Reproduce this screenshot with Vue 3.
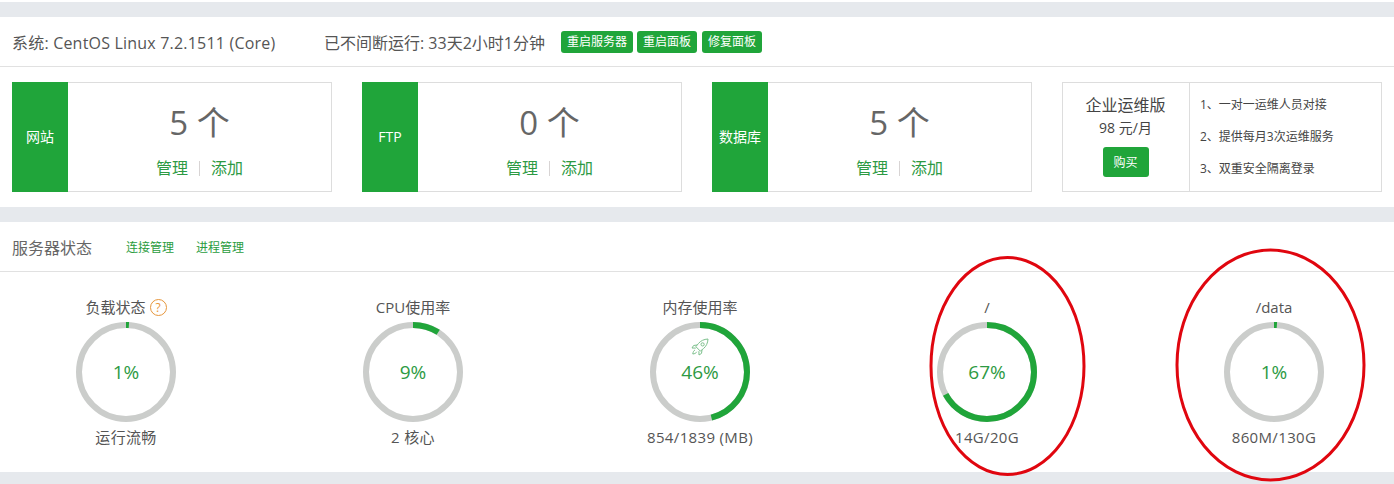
<template>
    <div class="page">
        <div class="band first"></div>

        <section class="panel top-panel">
            <div class="sys-bar">
                <span class="sys-name">系统: CentOS Linux 7.2.1511 (Core)</span>
                <span class="sys-uptime">已不间断运行: 33天2小时1分钟</span>
                <div class="sys-btns">
                    <button v-for="btn in sysButtons" :key="btn" type="button" class="btn-mini">{{ btn }}</button>
                </div>
            </div>

            <div class="cards">
                <div class="card" v-for="card in cards" :key="card.name">
                    <div class="card-tag">{{ card.name }}</div>
                    <div class="card-body">
                        <div class="card-count">{{ card.count }} 个</div>
                        <div class="card-links">
                            <a>管理</a><i class="sep"></i><a>添加</a>
                        </div>
                    </div>
                </div>

                <div class="card promo">
                    <div class="promo-left">
                        <div class="promo-title">企业运维版</div>
                        <div class="promo-price">98 元/月</div>
                        <button type="button" class="btn-buy">购买</button>
                    </div>
                    <ul class="promo-list">
                        <li>1、一对一运维人员对接</li>
                        <li>2、提供每月3次运维服务</li>
                        <li>3、双重安全隔离登录</li>
                    </ul>
                </div>
            </div>
        </section>

        <div class="band"></div>

        <section class="panel status-panel">
            <div class="status-bar">
                <span class="status-title">服务器状态</span>
                <a class="status-link first-link">连接管理</a>
                <a class="status-link">进程管理</a>
            </div>

            <div class="gauges">
                <div class="gauge" v-for="g in gauges" :key="g.title">
                    <div class="gauge-title">
                        {{ g.title }}
                        <span v-if="g.help" class="help">?</span>
                    </div>
                    <div class="ring">
                        <svg viewBox="0 0 100 100" width="100" height="100">
                            <circle cx="50" cy="50" r="47" fill="none" stroke="#cbcdcb" stroke-width="6" />
                            <circle cx="50" cy="50" r="47" fill="none" stroke="#20a53a" stroke-width="6"
                                :stroke-dasharray="dash(g.percent)" transform="rotate(-90 50 50)" />
                        </svg>
                        <svg v-if="g.rocket" class="rocket" viewBox="0 0 20 20" width="20" height="20">
                            <path d="M18 2c-4 .2-7.300 1.800-9.500 4.400L5.900 9.700l4.400 4.400 3.300-2.600C16.200 9.300 17.800 6 18 2z" fill="none" stroke="#7cc08c" stroke-width="1" />
                            <circle cx="12.600" cy="7.400" r="1.600" fill="none" stroke="#7cc08c" stroke-width="1" />
                            <path d="M7 8 3.600 8.500 2 11l3.800.1M12 13l-.5 3.400L9 18l-.1-3.800M5 13c-1.300.7-2 2-2.200 4 2-.2 3.300-.9 4-2.200" fill="none" stroke="#7cc08c" stroke-width="1" />
                        </svg>
                        <span class="ring-value">{{ g.percent }}%</span>
                    </div>
                    <div class="gauge-info">{{ g.info }}</div>
                </div>
            </div>
        </section>

        <div class="band last"></div>

        <!-- 截图上的红色标注 -->
        <svg class="marks" width="1394" height="484" viewBox="0 0 1394 484">
            <ellipse cx="1007.500" cy="366" rx="76.500" ry="108.500" fill="none" stroke="#e0060f" stroke-width="3" />
            <ellipse cx="1270.500" cy="365" rx="93.500" ry="115" fill="none" stroke="#e0060f" stroke-width="3" />
        </svg>
    </div>
</template>

<script setup>
const sysButtons = ['重启服务器', '重启面板', '修复面板'];

const cards = [
    { name: '网站', count: 5 },
    { name: 'FTP', count: 0 },
    { name: '数据库', count: 5 },
];

const gauges = [
    { title: '负载状态', help: true, percent: 1, info: '运行流畅' },
    { title: 'CPU使用率', percent: 9, info: '2 核心' },
    { title: '内存使用率', percent: 46, info: '854/1839 (MB)', rocket: true },
    { title: '/', percent: 67, info: '14G/20G' },
    { title: '/data', percent: 1, info: '860M/130G' },
];

const circumference = 2 * Math.PI * 47;

const dash = (percent) => {
    const len = (circumference * percent) / 100;
    return `${len} ${circumference - len}`;
};
</script>

<style>
html, body {
    margin: 0;
    background: #fff;
}
</style>

<style scoped>
.page {
    position: relative;
    width: 1394px;
    height: 484px;
    overflow: hidden;
    background: #fff;
    color: #555;
    font-family: "Open Sans", "Noto Sans CJK SC", sans-serif;
    font-size: 14px;
}

.band {
    height: 15px;
    background: #e6e9ed;
}

.band.first {
    margin-top: 2px;
}

.band.last {
    height: 12px;
}

.panel {
    background: #fff;
}

.top-panel {
    height: 190px;
}

.sys-bar {
    height: 49px;
    display: flex;
    align-items: center;
    padding-left: 12px;
    border-bottom: 1px solid #e1e1e1;
    font-size: 16px;
}

.sys-name {
    width: 312px;
    letter-spacing: 0.2px;
}

.sys-uptime {
    width: 237px;
}

.sys-btns {
    display: flex;
    gap: 4px;
}

.btn-mini {
    height: 22px;
    padding: 0 6px;
    border: none;
    border-radius: 3px;
    background: #20a53a;
    color: #fff;
    font-family: inherit;
    font-size: 12px;
    line-height: 22px;
}

.btn-mini:last-child {
    margin-left: 1px;
}

.cards {
    display: flex;
    gap: 30px;
    padding: 15px 12px 0;
}

.card {
    width: 320px;
    height: 110px;
    box-sizing: border-box;
    display: flex;
    border: 1px solid #ddd;
}

.card-tag {
    width: 56px;
    margin: -1px 0 -1px -1px;
    padding-bottom: 2px;
    box-sizing: border-box;
    display: flex;
    align-items: center;
    justify-content: center;
    background: #20a53a;
    color: #fff;
    font-size: 14px;
}

.card-body {
    flex: 1;
    text-align: center;
}

.card-count {
    margin-top: 15px;
    font-size: 33px;
    line-height: 50px;
    color: #666;
}

.card-links {
    margin-top: 9px;
    display: flex;
    align-items: center;
    justify-content: center;
    font-size: 16px;
    line-height: 22px;
}

.card-links a {
    color: #2d9a43;
}

.sep {
    width: 1px;
    height: 15px;
    margin: 0 11px;
    background: #d8d4d4;
}

.promo-left {
    width: 127px;
    padding-right: 1px;
    box-sizing: border-box;
    border-right: 1px solid #ddd;
    text-align: center;
    color: #444;
}

.promo-title {
    margin-top: 11px;
    font-size: 16px;
    line-height: 22px;
}

.promo-price {
    font-size: 14px;
    line-height: 20px;
    margin-top: 2px;
}

.btn-buy {
    width: 46px;
    height: 30px;
    margin-top: 9px;
    border: none;
    border-radius: 3px;
    background: #20a53a;
    color: #fff;
    font-family: inherit;
    font-size: 12px;
}

.promo-list {
    list-style: none;
    margin: 0;
    padding: 6px 0 0 10px;
    font-size: 12px;
    color: #444;
}

.promo-list li {
    height: 32px;
    line-height: 32px;
}

.status-panel {
    height: 250px;
}

.status-bar {
    height: 49px;
    display: flex;
    align-items: center;
    padding-left: 12px;
    border-bottom: 1px solid #e1e1e1;
}

.status-title {
    width: 114px;
    font-size: 16px;
    color: #666;
}

.status-link {
    width: 70px;
    font-size: 12px;
    color: #2a9c40;
}

.gauges {
    display: flex;
    gap: 187px;
    padding-left: 76px;
}

.gauge {
    position: relative;
    width: 100px;
    display: flex;
    flex-direction: column;
    align-items: center;
    white-space: nowrap;
    font-size: 15px;
}

.gauge-title {
    height: 24px;
    margin-top: 23px;
    margin-bottom: 3px;
    line-height: 24px;
    display: flex;
    align-items: center;
    gap: 4px;
}

.help {
    width: 17px;
    height: 17px;
    box-sizing: border-box;
    border: 1px solid #e6963c;
    border-radius: 50%;
    color: #e6963c;
    font-size: 12px;
    line-height: 15px;
    text-align: center;
}

.ring {
    position: relative;
    width: 100px;
    height: 100px;
}

.ring > svg:first-child {
    display: block;
}

.ring-value {
    position: absolute;
    inset: 0;
    display: flex;
    align-items: center;
    justify-content: center;
    font-size: 19px;
    color: #2d9a43;
}

.rocket {
    position: absolute;
    left: 40px;
    top: 15px;
}

.gauge-info {
    margin-top: 4px;
    line-height: 22px;
    letter-spacing: 0.35px;
}

.marks {
    position: absolute;
    left: 0;
    top: 0;
    pointer-events: none;
}
</style>
